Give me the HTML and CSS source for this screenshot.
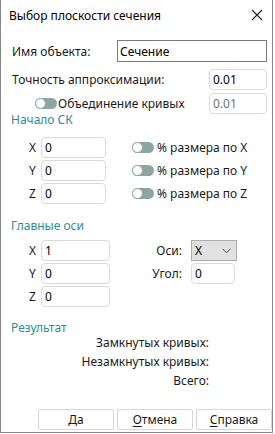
FILE: index.html
```html
<!DOCTYPE html>
<html lang="ru">
<head>
  <meta charset="UTF-8">
  <title>Выбор плоскости сечения</title>
  <meta name="viewport" content="width=device-width, initial-scale=1.0">
  <link rel="stylesheet" href="styles.css">
</head>
<body>
  <div class="window">
    <div class="titlebar">
      <span class="title">Выбор плоскости сечения</span>
      <svg class="close" width="12" height="12" viewBox="0 0 12 12">
        <path d="M1 1 L11 11 M11 1 L1 11" stroke="#222" stroke-width="1.1" fill="none"/>
      </svg>
    </div>

    <div class="row name-row">
      <label class="lbl">Имя объекта:</label>
      <input class="field name-field" type="text" value="Сечение">
    </div>

    <div class="row acc-row">
      <label class="lbl">Точность аппроксимации:</label>
      <input class="field small-field" type="text" value="0.01">
    </div>

    <div class="row merge-row">
      <span class="toggle"></span>
      <span class="lbl merge-lbl">Объединение кривых</span>
      <input class="field small-field disabled" type="text" value="0.01" disabled>
    </div>

    <div class="section origin-head">Начало СК</div>

    <div class="grid origin">
      <div class="row xyz">
        <span class="axis">X</span>
        <input class="field coord" type="text" value="0">
        <span class="toggle pct-toggle"></span>
        <span class="lbl">% размера по X</span>
      </div>
      <div class="row xyz">
        <span class="axis">Y</span>
        <input class="field coord" type="text" value="0">
        <span class="toggle pct-toggle"></span>
        <span class="lbl">% размера по Y</span>
      </div>
      <div class="row xyz">
        <span class="axis">Z</span>
        <input class="field coord" type="text" value="0">
        <span class="toggle pct-toggle"></span>
        <span class="lbl">% размера по Z</span>
      </div>
    </div>

    <div class="section axes-head">Главные оси</div>

    <div class="axes">
      <div class="row xyz">
        <span class="axis">X</span>
        <input class="field coord wide" type="text" value="1">
        <span class="lbl side">Оси:</span>
        <div class="select">
          <span>X</span>
          <svg width="9" height="6" viewBox="0 0 9 6">
            <path d="M0.5 0.8 L4.5 4.8 L8.5 0.8" stroke="#444" stroke-width="1" fill="none"/>
          </svg>
        </div>
      </div>
      <div class="row xyz">
        <span class="axis">Y</span>
        <input class="field coord wide" type="text" value="0">
        <span class="lbl side">Угол:</span>
        <input class="field angle" type="text" value="0">
      </div>
      <div class="row xyz">
        <span class="axis">Z</span>
        <input class="field coord wide" type="text" value="0">
      </div>
    </div>

    <div class="section result-head">Результат</div>

    <div class="results">
      <div class="res">Замкнутых кривых:</div>
      <div class="res">Незамкнутых кривых:</div>
      <div class="res">Всего:</div>
    </div>

    <div class="buttons">
      <button class="btn">Да</button>
      <button class="btn"><u>О</u>тмена</button>
      <button class="btn"><u>С</u>правка</button>
    </div>
  </div>
</body>
</html>
```

FILE: styles.css
```css
body {
  margin: 0;
  background: #fff;
  font-family: "Noto Sans", "Open Sans", sans-serif;
  font-size: 12px;
  color: #1a1a1a;
}
.window {
  width: 273px;
  height: 433px;
  box-sizing: border-box;
  border: 1px solid #8a8a8a;
  border-top: none;
  position: relative;
}
.titlebar {
  height: 30px;
  display: flex;
  align-items: center;
  justify-content: space-between;
  padding: 0 8px 0 8px;
}
.title {
  color: #000;
  font-size: 12px;
}
.close {
  margin-right: 1px;
}
.row {
  display: flex;
  align-items: center;
}
.lbl {
  white-space: nowrap;
}
.field {
  font-family: inherit;
  font-size: 12px;
  color: #000;
  box-sizing: border-box;
  height: 21px;
  padding: 0 3px;
  border: 1px solid #dadada;
  border-radius: 4px;
  background: #fff;
  outline: none;
}
.name-row {
  margin-top: 10px;
  padding-left: 11px;
}
.name-row .lbl {
  width: 105px;
}
.name-field {
  width: 150px;
  height: 22px;
  border: 1px solid #7a7a7a;
  border-radius: 0;
  padding-left: 2px;
}
.acc-row {
  margin-top: 7px;
  padding-left: 11px;
}
.acc-row .lbl {
  width: 197px;
}
.small-field {
  width: 58px;
}
.merge-row {
  margin-top: 3px;
  padding-left: 34px;
}
.merge-lbl {
  width: 151px;
  margin-left: 1px;
}
.disabled {
  color: #707070;
  background: #fff;
}
.toggle {
  display: inline-block;
  width: 22px;
  height: 11px;
  border-radius: 6px;
  background: #8ea6a2;
  position: relative;
}
.toggle::after {
  content: "";
  position: absolute;
  left: 0;
  top: -0.5px;
  width: 11px;
  height: 11px;
  box-sizing: border-box;
  border-radius: 50%;
  background: #fff;
  border: 1px solid #8ea6a2;
}
.section {
  color: #2a8f94;
  padding-left: 10px;
  line-height: 14px;
}
.origin-head {
  margin-top: -1px;
}
.origin {
  margin-top: 10px;
}
.xyz {
  padding-left: 28px;
  margin-bottom: 2px;
}
.axis {
  width: 12px;
}
.coord {
  width: 65px;
}
.coord.wide {
  width: 69px;
}
.pct-toggle {
  margin-left: 26px;
  margin-right: 3px;
}
.axes-head {
  margin-top: 15px;
}
.axes {
  margin-top: 7px;
}
.side {
  width: 81px;
  text-align: right;
  padding-right: 9px;
  box-sizing: border-box;
}
.select {
  width: 46px;
  height: 21px;
  box-sizing: border-box;
  border: 1px solid #adadad;
  background: #e1e1e1;
  display: flex;
  align-items: center;
  justify-content: space-between;
  padding: 0 5px 0 3px;
  color: #000;
}
.angle {
  width: 44px;
}
.result-head {
  margin-top: 14px;
}
.results {
  width: 208px;
  text-align: right;
  margin-top: -2px;
}
.res {
  line-height: 19px;
}
.buttons {
  position: absolute;
  left: 37px;
  bottom: 2px;
  display: flex;
  gap: 3px;
}
.btn {
  width: 76px;
  height: 21px;
  font-family: inherit;
  font-size: 12px;
  color: #1a1a1a;
  background: #fff;
  border: 1px solid #d6d6d6;
  border-radius: 2px;
  padding: 0;
}
.btn u {
  text-decoration-thickness: 1px;
  text-underline-offset: 2px;
}
```
